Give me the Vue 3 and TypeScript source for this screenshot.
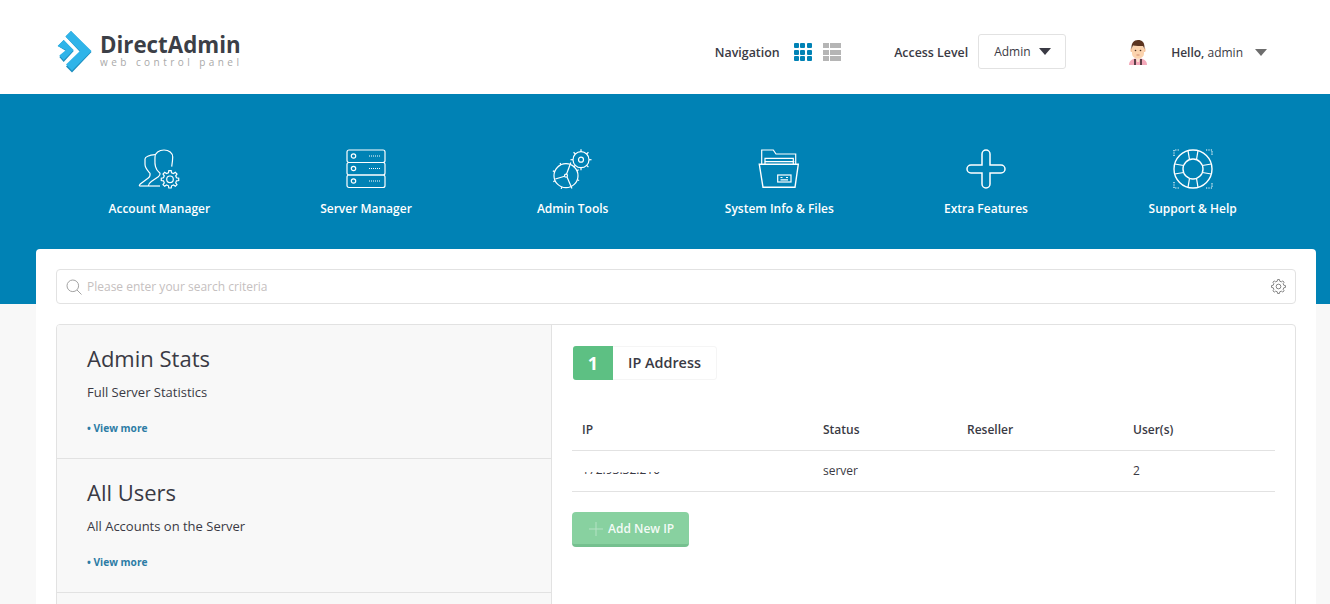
<script setup lang="ts">
const navItems = [
  { key: 'account', label: 'Account Manager' },
  { key: 'server', label: 'Server Manager' },
  { key: 'tools', label: 'Admin Tools' },
  { key: 'files', label: 'System Info & Files' },
  { key: 'extra', label: 'Extra Features' },
  { key: 'support', label: 'Support & Help' },
]

const sideItems = [
  { title: 'Admin Stats', text: 'Full Server Statistics' },
  { title: 'All Users', text: 'All Accounts on the Server' },
]

const smallTeeth = [0, 45, 90, 135, 180, 225, 270, 315]
const wheelTeeth = [20, 65, 110, 155, 200, 245, 290, 335]
const ringBands = [0, 90, 180, 270]
const ringCorners = ['M1 7V1H7', 'M33 1H39V7', 'M1 33V39H7', 'M33 39H39V33']

// toothed outline for the little cog icons
function gearPath(cx: number, cy: number, inner: number, outer: number, teeth: number) {
  const step = (Math.PI * 2) / teeth
  const pts: string[] = []
  for (let i = 0; i < teeth; i++) {
    const a = i * step
    const spots: [number, number][] = [
      [a - step * 0.3, inner],
      [a - step * 0.17, outer],
      [a + step * 0.17, outer],
      [a + step * 0.3, inner],
    ]
    for (const [t, r] of spots) {
      pts.push(`${(cx + Math.sin(t) * r).toFixed(2)} ${(cy - Math.cos(t) * r).toFixed(2)}`)
    }
  }
  return 'M' + pts.join('L') + 'Z'
}
</script>

<template>
  <div class="page">
    <header class="top">
      <div class="logo">
        <svg class="logo-mark" viewBox="0 0 36 42" width="36" height="42">
          <path d="M14 0 34.500 21 15 41.500 9 35.500 23 21 8.500 5.500Z" fill="#1e8fc0" />
          <path d="M14 0 34.500 20 15 39.500 9 33.500 23 20 8.500 5.500Z" fill="#2fb4e9" />
          <path d="M6.700 9 16.700 20 6.700 31 2.300 26 9 20 .7 15Z" fill="#1e8fc0" />
          <path d="M6.700 9 16.700 19 6.700 29 2.300 24.500 9 19 .7 15Z" fill="#2fb4e9" />
        </svg>
        <div class="logo-text">
          <div class="logo-name">DirectAdmin</div>
          <div class="logo-sub">web control panel</div>
        </div>
      </div>

      <div class="top-right">
        <span class="top-label">Navigation</span>
        <div class="view-grid">
          <i v-for="n in 9" :key="n"></i>
        </div>
        <div class="view-list">
          <i v-for="n in 6" :key="n"></i>
        </div>
        <span class="top-label access">Access Level</span>
        <div class="level-select">
          <span>Admin</span>
          <b class="caret dark"></b>
        </div>
        <svg class="avatar" viewBox="0 0 20 25" width="20" height="25">
          <path d="M1 25c0-4 3-6 6-6.500h6c3 .5 6 2.500 6 6.500Z" fill="#f4a9ba" />
          <path d="M6 19h2v6H6ZM12 19h2v6h-2Z" fill="#5c4048" />
          <path d="M8 18h4l-1 4H9Z" fill="#fbe3d0" />
          <rect x="2.500" y="8" width="2" height="4" rx="1" fill="#f5c49c" />
          <rect x="15.500" y="8" width="2" height="4" rx="1" fill="#f5c49c" />
          <rect x="4" y="4" width="12" height="14.500" rx="5" fill="#fbd3ae" />
          <path d="M3.500 9C3 3 6 0 10 0s7 2 6.500 9L15 6C12 6 8 6 5 5.500Z" fill="#5b3420" />
          <circle cx="7.500" cy="10.500" r=".8" fill="#4a3020" />
          <circle cx="12.500" cy="10.500" r=".8" fill="#4a3020" />
          <path d="M8.500 15h3" stroke="#c9785f" stroke-width=".8" />
        </svg>
        <span class="hello"><strong>Hello,</strong> admin</span>
        <b class="caret grey"></b>
      </div>
    </header>

    <section class="banner">
      <nav class="nav">
        <a v-for="item in navItems" :key="item.key" class="nav-item">
          <svg class="nav-icon" viewBox="0 0 44 40" width="44" height="40" fill="none" stroke="#fff" stroke-width="1.200">
            <template v-if="item.key === 'account'">
              <path d="M2.300 37c0-1 0-1 1-2l8-6c2-1.500 2-3 1.700-4.700-2.500-2.800-5-5-5-9V10c0-2 4-4 10-4.300" />
              <path d="M11.300 37c0-2 1-3 3-4.500l7-4.800c1.500-1.200 2-2 1.700-3.400-2.500-2-4-4-4.500-6.600C17.500 14 18 11 18 8c0-4 4-7 9-7s8.700 3 8.700 7c0 3-.5 6.500-1 9.700" />
              <path d="M2.300 37H23" />
              <circle cx="33" cy="30.300" r="3.300" />
              <path :d="gearPath(33, 30.300, 6.700, 8.800, 8)" />
            </template>
            <template v-else-if="item.key === 'server'">
              <rect x="3" y="1" width="38" height="12.500" rx="2" />
              <rect x="3" y="13.500" width="38" height="12.500" rx="2" />
              <rect x="3" y="26" width="38" height="12.500" rx="2" />
              <circle cx="9.500" cy="7" r="2.200" />
              <circle cx="9.500" cy="19.500" r="2.200" />
              <circle cx="9.500" cy="32" r="2.200" />
              <path d="M25 7h12M25 19.500h12M25 32h12" stroke-dasharray="1 1" />
            </template>
            <template v-else-if="item.key === 'tools'">
              <circle cx="15" cy="26.700" r="12" />
              <circle cx="15" cy="26.700" r="1.500" />
              <path d="M15.500 25.300 19 15.700M13.600 27.200 4.300 30M16 27.900 20 37.300" />
              <path
                v-for="a in wheelTeeth"
                :key="a"
                d="M15 12.700v2"
                :transform="`rotate(${a} 15 26.700)`"
              />
              <circle cx="30" cy="10.700" r="8" />
              <circle cx="30" cy="10.700" r="2.500" />
              <path
                v-for="a in smallTeeth"
                :key="'small' + a"
                d="M30 .2v2.500"
                :transform="`rotate(${a} 30 10.700)`"
              />
            </template>
            <template v-else-if="item.key === 'files'">
              <path d="M4.700 15.300V1h11.600L19 5h19.700v10.300" />
              <path d="M8 15.300V9.300h28.300v6M7.300 12.700h30" />
              <path d="M2.300 15.300h39L38 38.300H6Z" stroke-width="1.400" />
              <rect x="20.700" y="26" width="13.300" height="7" />
              <path d="M23.500 28.500h2M29 28.500h2M23.500 30.800h7.500" />
            </template>
            <template v-else-if="item.key === 'extra'">
              <path
                d="M18 5a4 4 0 0 1 8 0v11h11a4 4 0 0 1 0 8H26v11a4 4 0 0 1-8 0V24H7a4 4 0 0 1 0-8h11Z"
                stroke-width="1.500"
              />
            </template>
            <template v-else>
              <g transform="translate(2 0)">
                <circle cx="20" cy="20" r="19" stroke-width="1.400" />
                <circle cx="20" cy="20" r="10" stroke-width="1.400" />
                <path
                  v-for="a in ringBands"
                  :key="a"
                  d="M15 1.700 16.500 10.600M25 1.700 23.500 10.600"
                  :transform="`rotate(${a} 20 20)`"
                />
                <path v-for="c in ringCorners" :key="c" :d="c" stroke-dasharray="1.200 1.200" />
              </g>
            </template>
          </svg>
          <span class="nav-label">{{ item.label }}</span>
        </a>
      </nav>
    </section>

    <main class="card">
      <div class="search">
        <svg class="search-icon" viewBox="0 0 16 16" width="16" height="16" fill="none" stroke="#a3a3a3">
          <circle cx="6.800" cy="6.800" r="5.800" />
          <path d="M11 11l4.500 4.500" />
        </svg>
        <span class="search-text">Please enter your search criteria</span>
        <svg class="search-gear" viewBox="0 0 16 16" width="15" height="15" fill="none" stroke="#7d7d7d">
          <circle cx="8" cy="8" r="2.500" />
          <path :d="gearPath(8, 8, 5.800, 7.500, 8)" />
        </svg>
      </div>

      <div class="panel">
        <aside class="side">
          <div v-for="s in sideItems" :key="s.title" class="side-item">
            <h2>{{ s.title }}</h2>
            <p>{{ s.text }}</p>
            <a class="more">• View more</a>
          </div>
          <div class="side-item"></div>
        </aside>

        <section class="content">
          <div class="count">
            <span class="count-num">1</span>
            <span class="count-label">IP Address</span>
          </div>

          <table class="ip-table">
            <colgroup>
              <col class="c1" />
              <col class="c2" />
              <col class="c3" />
              <col />
            </colgroup>
            <thead>
              <tr>
                <th>IP</th>
                <th>Status</th>
                <th>Reseller</th>
                <th>User(s)</th>
              </tr>
            </thead>
            <tbody>
              <tr>
                <td><span class="ip-cut">172.93.32.210</span></td>
                <td>server</td>
                <td></td>
                <td>2</td>
              </tr>
            </tbody>
          </table>

          <button class="add-btn" type="button">
            <svg viewBox="0 0 14 14" width="14" height="14" stroke="#b4e2c4" fill="none">
              <path d="M7 0v14M0 7h14" />
            </svg>
            Add New IP
          </button>
        </section>
      </div>
    </main>
  </div>
</template>

<style>
html,
body {
  margin: 0;
  overflow: hidden;
}
</style>

<style scoped>
.page {
  position: relative;
  height: 604px;
  overflow: hidden;
  background: #f8f8f8;
  font-family: 'Open Sans', sans-serif;
  color: #3a3a44;
}

.top {
  display: flex;
  align-items: center;
  justify-content: space-between;
  box-sizing: border-box;
  height: 94px;
  padding: 10px 63px 0 57px;
  background: #fff;
}

.logo {
  display: flex;
  align-items: center;
  gap: 7px;
}

.logo-mark {
  display: block;
}

.logo-text {
  margin-bottom: 4px;
}

.logo-name {
  font-size: 22.300px;
  line-height: 24px;
  font-weight: 700;
  color: #3c3f47;
}

.logo-sub {
  font-size: 10px;
  line-height: 10px;
  letter-spacing: 3.450px;
  color: #a9a9a9;
  white-space: nowrap;
}

.top-right {
  display: flex;
  align-items: center;
}

.top-label {
  font-size: 12.400px;
  font-weight: 600;
  color: #3a3a44;
}

.view-grid {
  display: grid;
  grid-template-columns: repeat(3, 5px);
  grid-auto-rows: 5px;
  gap: 1.500px;
  margin-left: 14px;
}

.view-grid i {
  background: #0082b5;
  border-radius: 1px;
}

.view-list {
  display: grid;
  grid-template-columns: 6px 11px;
  grid-auto-rows: 5px;
  gap: 1.500px;
  margin-left: 11px;
}

.view-list i {
  background: #b5b5b5;
}

.access {
  margin-left: 53px;
}

.level-select {
  display: flex;
  align-items: center;
  justify-content: space-between;
  box-sizing: border-box;
  width: 88px;
  height: 35px;
  margin: -1px 0 1px 10px;
  padding: 0 14px 0 15px;
  border: 1px solid #e2e2e2;
  border-radius: 3px;
  font-size: 12px;
}

.caret {
  display: block;
  width: 0;
  height: 0;
  border-left: 6px solid transparent;
  border-right: 6px solid transparent;
  border-top: 7px solid #3a3a44;
}

.caret.grey {
  margin-left: 12px;
  border-left-width: 6.500px;
  border-right-width: 6.500px;
  border-top-color: #6d6d6d;
}

.avatar {
  margin-left: 62px;
}

.hello {
  margin-left: 23px;
  font-size: 12px;
}

.hello strong {
  font-weight: 600;
}

.banner {
  height: 210px;
  box-sizing: border-box;
  padding: 55px 34px 0 56px;
  background: #0082b5;
}

.nav {
  display: grid;
  grid-template-columns: repeat(6, 1fr);
}

.nav-item {
  display: flex;
  flex-direction: column;
  align-items: center;
  color: #fff;
}

.nav-icon {
  display: block;
  height: 40px;
}

.nav-label {
  margin-top: 11px;
  font-size: 12px;
  line-height: 17px;
  font-weight: 600;
}

.card {
  position: absolute;
  top: 249px;
  left: 36px;
  right: 14px;
  bottom: -20px;
  box-sizing: border-box;
  padding: 20px;
  background: #fff;
  border-radius: 4px 4px 0 0;
}

.search {
  display: flex;
  align-items: center;
  box-sizing: border-box;
  height: 35px;
  padding: 0 9px;
  border: 1px solid #e2e2e2;
  border-radius: 4px;
}

.search-text {
  flex: 1;
  margin-left: 5px;
  font-size: 12px;
  color: #c5c0c0;
}

.panel {
  display: flex;
  height: 400px;
  margin-top: 20px;
  border: 1px solid #e2e2e2;
  border-radius: 4px;
  overflow: hidden;
}

.side {
  flex: none;
  width: 495px;
  box-sizing: border-box;
  border-right: 1px solid #e2e2e2;
  background: #f8f8f8;
}

.side-item {
  height: 134px;
  box-sizing: border-box;
  padding: 18px 30px 0;
  border-bottom: 1px solid #e2e2e2;
}

.side-item h2 {
  margin: 0;
  font-size: 22px;
  line-height: 30px;
  font-weight: 400;
  color: #3a3a44;
}

.side-item p {
  margin: 10px 0 0;
  font-size: 13px;
  line-height: 18px;
}

.more {
  display: block;
  margin-top: 20px;
  font-size: 10.200px;
  line-height: 14px;
  font-weight: 700;
  color: #2d7ca5;
}

.content {
  flex: 1;
  padding: 21px 20px 0;
}

.count {
  display: inline-flex;
  box-sizing: border-box;
  height: 34px;
  margin-left: 1px;
  border: 1px solid #f5f5f5;
  border-radius: 3px;
  vertical-align: top;
}

.count-num {
  display: flex;
  align-items: center;
  justify-content: center;
  width: 40px;
  margin: -1px 0 -1px -1px;
  background: #5dc083;
  border-radius: 3px 0 0 3px;
  color: #fff;
  font-size: 18px;
  font-weight: 700;
}

.count-label {
  padding: 0 15px;
  font-size: 14.400px;
  line-height: 32px;
  font-weight: 600;
}

.ip-table {
  display: table;
  width: 703px;
  margin-top: 29px;
  border-collapse: collapse;
  table-layout: fixed;
  font-size: 12px;
}

.c1 {
  width: 241px;
}

.c2 {
  width: 144px;
}

.c3 {
  width: 166px;
}

.ip-table th,
.ip-table td {
  box-sizing: border-box;
  height: 41px;
  padding: 0 10px;
  border-bottom: 1px solid #e2e2e2;
  text-align: left;
}

.ip-table th {
  font-weight: 600;
}

.ip-cut {
  clip-path: inset(65% 0 0 0);
  display: inline-block;
  transform: translateY(-1px);
}

.add-btn {
  display: flex;
  align-items: center;
  gap: 5px;
  box-sizing: border-box;
  width: 117px;
  height: 35px;
  margin-top: 20px;
  padding: 2px 0 0 17px;
  border: 0;
  border-bottom: 3px solid #75c08f;
  border-radius: 4px;
  background: #88d1a0;
  color: rgba(255, 255, 255, 0.92);
  font-family: inherit;
  font-size: 12px;
  font-weight: 600;
}
</style>
